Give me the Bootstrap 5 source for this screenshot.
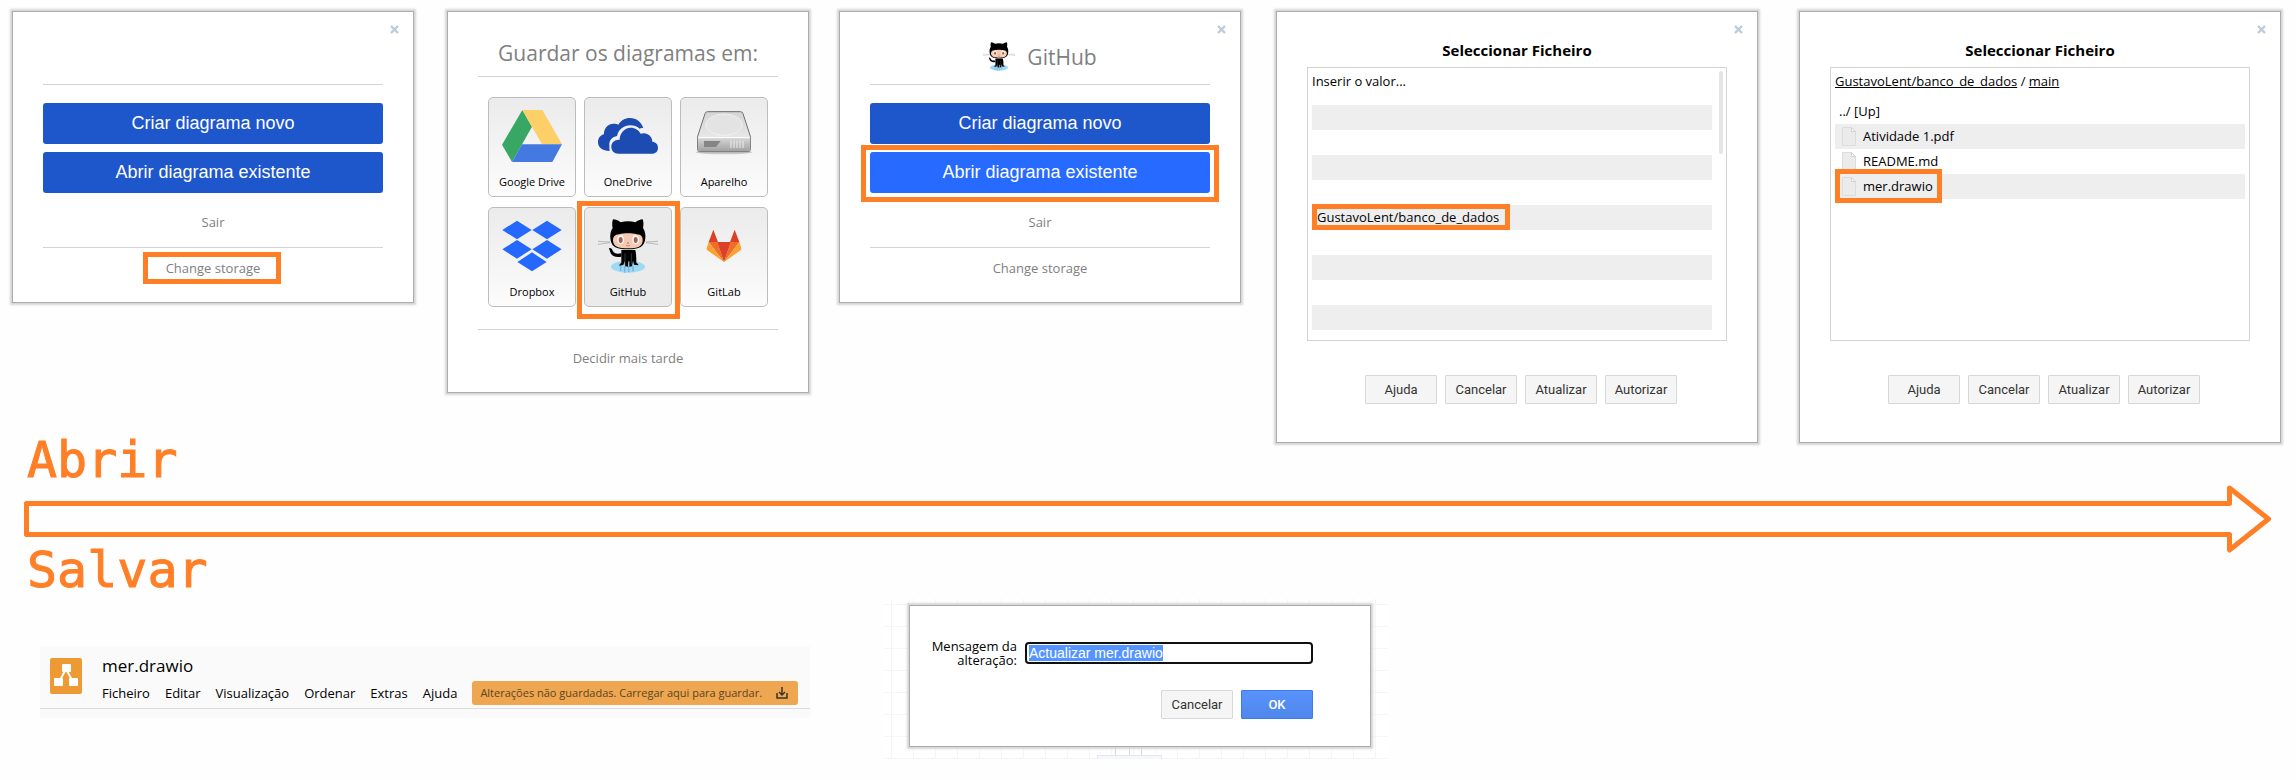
<!DOCTYPE html>
<html lang="pt">
<head>
<meta charset="utf-8">
<meta name="viewport" content="width=device-width, initial-scale=1">
<title>draw.io: abrir e salvar no GitHub</title>
<link rel="stylesheet" href="https://cdn.jsdelivr.net/npm/bootstrap@5.3.0/dist/css/bootstrap.min.css">
<style>
  :root { --mark: #ff7f27; }
  body { background: #fefefe; color: #000; font: 13px/18px "Open Sans", "Noto Sans", sans-serif; }
  a { color: inherit; text-decoration: none; }
  .steps { display: grid; grid-template-columns: 447fr 392fr 437fr 523fr 497fr; padding-top: 11px; align-items: start; }
  .step-a { padding: 0 33px 0 12px; }
  .step-b { padding-right: 30px; }
  .step-c { padding-right: 35px; }
  .step-d { padding-right: 41px; }
  .step-e { padding-right: 15px; }
  .dlg { background: #fff; border: 1px solid #acacac; box-shadow: 0 0 2px 2px #d5d5d5; padding: 0 30px; }
  .dlg-close { position: absolute; top: 13px; right: 14px; width: 9px; height: 9px; padding: 0; border: 0; background: none; display: flex; }
  .dlg-head { height: 72px; color: #808080; font-size: 21px; line-height: 28px; gap: 12px; padding-top: 18px; }
  .dlg-head-lg { height: 64px; }
  .rule { border-top: 1px solid #d3d3d3; }
  .main-btns { margin-top: 18px; }
  .btn-main { display: block; width: 100%; height: 41px; padding: 0; border: 0; border-radius: 3px; background: #1e56cb; color: #fff; font: 18px/41px "Liberation Sans", Arial, sans-serif; }
  .btn-hot { background: #266aff; }
  .quiet { color: #808080; }
  .exit-row { height: 54px; padding-top: 20px; }
  .storage-row { height: 54px; padding-top: 11px; }
  .later-row { height: 62px; padding-top: 19px; }
  .ring { position: relative; }
  .ring::after { content: ""; position: absolute; z-index: 2; inset: var(--ring); border: 5px solid var(--mark); pointer-events: none; }
  .ring-link { --ring: -7px -21px -7px -23px; }
  .ring-btn { --ring: -7px -9px -9px -9px; }
  .ring-tile { --ring: -7px -9px -13px -8px; }
  .ring-repo { --ring: -4px -11px -4px -5px; }
  .ring-file { --ring: -5px -9px -5px -7px; }
  .tiles { display: grid; grid-template-columns: repeat(3, 88px); gap: 10px 8px; justify-content: center; padding: 20px 0 22px; }
  .tile { height: 100px; padding: 9px 0 6px; border: 1px solid #bcbcbc; border-radius: 5px; background: linear-gradient(#ebebeb, #fcfcfc); color: #000; font-size: 11px; line-height: 16px; text-align: center; }
  .tile svg { display: block; width: 60px; height: 60px; margin: 0 auto 7px; }
  .tile-hot { background: #ebebeb; }
  .pick-title { font-size: 15px; line-height: 20px; font-weight: 700; padding: 28px 0 7px; margin: 0; text-align: center; }
  .pick-box { border: 1px solid #d3d3d3; height: 274px; padding: 4px; overflow: hidden; }
  .repo { height: 25px; padding: 0 5px; line-height: 25px; }
  .repos { margin-right: 10px; }
  .repos .repo:nth-child(even), .files .file:nth-child(even) { background: #eee; }
  .repo:first-child { height: 33px; padding: 0; line-height: 18px; }
  .repo a { line-height: 18px; }
  .thumb { position: absolute; top: 3px; right: 3px; width: 4px; height: 83px; border-radius: 2px; background: #e5e5e5; }
  .crumb { line-height: 18px; margin-bottom: 9px; }
  .crumb a { text-decoration: underline; }
  .file { height: 25px; line-height: 24px; padding-left: 7px; }
  .file-up { padding-left: 4px; }
  .file svg { width: 14px; height: 19px; margin-right: 7px; }
  .btn-tool { height: 29px; width: 72px; padding: 0; border: 1px solid #d8d8d8; border-radius: 1px; background: #f5f5f5; color: #333; font: 13px/27px Roboto, "Liberation Sans", sans-serif; }
  .btn-ok { background: linear-gradient(#5892fd, #4f87ea); border-color: #3a7bf0; color: #fff; font-weight: 500; }
  .btns { padding: 34px 0 38px 8px; gap: 8px; }
  .word { font: 50px/34px "DejaVu Sans Mono", monospace; color: var(--mark); -webkit-text-stroke: 1px var(--mark); margin: 0; padding-left: 27px; }
  .shaft { height: 36px; border: 5px solid var(--mark); border-right: 0; border-radius: 3px 0 0 3px; }
  .saves { display: grid; grid-template-columns: 884fr 504fr 908fr; align-items: start; padding-top: 12px; }
  .bar-cell { padding: 47px 74px 0 40px; }
  .appbar { background: #fafafa; height: 63px; border-bottom: 1px solid #dadce0; padding-left: 10px; }
  .logo { margin-top: 12px; }
  .appfoot { background: #fafafa; height: 9px; }
  .doc-name { font-size: 17px; line-height: 24px; margin-bottom: 3px; }
  .menu { gap: 15px; line-height: 24px; padding-right: 12px; }
  .save-note { flex: 1; justify-content: space-between; height: 24px; padding: 0 10px 0 8px; border: 0; border-radius: 3px; background: #efa650; color: #5b4524; font-size: 11px; line-height: 24px; white-space: nowrap; }
  .canvas { padding: 6px 17px 12px 25px; background-color: #fff; background-image: linear-gradient(#f5f5f5 1px, transparent 1px), linear-gradient(90deg, #f5f5f5 1px, transparent 1px); background-size: 22px 22px; background-position: 7px 5px; }
  .node { position: absolute; left: 213px; bottom: 0; width: 66px; height: 12px; }
  .msg { height: 142px; padding: 33px 57px 0 16px; }
  .msg label { width: 91px; line-height: 14px; text-align: right; }
  .msg input { height: 22px; min-width: 0; padding: 0 2px; border: 2px solid #101010; border-radius: 4px; outline: 0; font: 14px/16px "Liberation Sans", Arial, sans-serif; }
  .msg input::selection { background: rgba(83, 147, 255, .99); color: #fff; }
  .msg-btns { padding-top: 23px; }
</style>
</head>
<body>
<svg width="0" height="0" class="position-absolute" aria-hidden="true">
  <symbol id="cat" viewBox="369 51 180 180">
    <ellipse cx="459" cy="200" rx="51" ry="18" fill="#9fdaf5"/>
    <path d="M437 197v16M449 197v21M461 197v20M474 197v17" stroke="#7cb7e0" stroke-width="5"/>
    <path d="M369 124l36 2M369 133l36-5M549 124l-36 2M549 133l-36-5" stroke="#8c8c8c" stroke-width="1.6" fill="none"/>
    <path d="M402 144c8-1 10 5 12 10 4 8 14 8 25 6v10c-18 3-29-2-33-13-1-5-3-8-4-13z" fill="#000"/>
    <path d="M439 150h42c3 12 3 26 3 38l6 5-1 3-12-2-3-12-3 17-8 1v-16h-3l-1 16-8-1-2-16-4 12-12 2 1-4 5-5z" fill="#000"/>
    <path d="M450 160v34M469 160v34" stroke="#555" stroke-width="2"/>
    <path d="M414 58c8 0 16 4 23 9 14-4 31-4 44 0 7-5 15-8 22-9 3 8 3 17 1 26 6 9 8 18 7 30-2 27-18 34-53 34s-50-7-52-34c-1-12 1-21 7-30-2-9-2-18 1-26z" fill="#000"/>
    <path d="M433 103c12-4 40-4 52 0 15 0 19 10 18 20-2 16-14 22-44 22s-43-6-45-22c-1-10 5-20 19-20z" fill="#f4cbb2"/>
    <ellipse cx="437" cy="119" rx="10" ry="13" fill="#fff"/><ellipse cx="482" cy="119" rx="10" ry="13" fill="#fff"/>
    <ellipse cx="437" cy="120" rx="6" ry="9" fill="#ad5c51"/><ellipse cx="482" cy="120" rx="6" ry="9" fill="#ad5c51"/>
    <circle cx="459" cy="129" r="2.5" fill="#ad5c51"/><path d="M453 136q6 4 12 0" stroke="#ad5c51" stroke-width="2" fill="none"/>
  </symbol>
  <symbol id="cross" viewBox="0 0 9 9"><path d="M1 1l7 7M8 1L1 8" stroke="#bccade" stroke-width="2.4"/></symbol>
  <symbol id="sheet" viewBox="0 0 14 19"><path d="M.5.5h9l4 4v14H.5z" fill="#ebebeb" stroke="#dcdcdc"/><path d="M9.5.5v4h4z" fill="#f8f8f8" stroke="#d2d2d2"/></symbol>
</svg>

<main>
  <section class="steps">
    <div class="step-a">
      <div class="dlg position-relative">
        <button class="dlg-close" aria-label="Fechar"><svg width="9" height="9"><use href="#cross"/></svg></button>
        <div class="dlg-head"></div>
        <div class="rule"></div>
        <div class="main-btns d-grid gap-2">
          <button class="btn-main">Criar diagrama novo</button>
          <button class="btn-main">Abrir diagrama existente</button>
        </div>
        <div class="exit-row text-center"><a href="#" class="quiet">Sair</a></div>
        <div class="rule"></div>
        <div class="storage-row text-center"><a href="#" class="quiet d-inline-block ring ring-link">Change storage</a></div>
      </div>
    </div>

    <div class="step-b">
      <div class="dlg">
        <div class="dlg-head dlg-head-lg d-flex justify-content-center align-items-center">Guardar os diagramas em:</div>
        <div class="rule"></div>
        <div class="tiles">
          <button class="tile"><svg viewBox="81 51 180 180"><path d="M142 60l29 50-60 106-30-52z" fill="#37a763"/><path d="M142 60h60l59 103h-60z" fill="#fdcf67"/><path d="M141 163h120l-29 53H111z" fill="#4579e2"/></svg>Google Drive</button>
          <button class="tile"><svg viewBox="369 51 180 180"><path d="M404 183c-22 0-35-11-35-27 0-12 8-21 18-23-1-18 12-32 29-32 6 0 10 1 14 3 7-12 20-20 35-20 19 0 34 11 40 31-4-1-8-1-11 1-8-7-18-10-28-10-20 0-36 13-40 32-14 2-24 13-23 27 0 7 0 12 1 18z" fill="#1c4bb1"/><path d="M431 191c-14 0-22-9-22-21 0-13 10-22 25-21 0-19 14-36 33-36 14 0 24 7 30 18 18-6 35 6 35 24 11 1 17 9 17 18 0 11-7 18-19 18z" fill="#1c4bb1" stroke="#f1f1f1" stroke-width="5" paint-order="stroke"/></svg>OneDrive</button>
          <button class="tile"><svg viewBox="657 51 180 180"><defs><linearGradient id="h1" x2="0" y2="1"><stop stop-color="#d4d4d4"/><stop offset="1" stop-color="#f2f2f2"/></linearGradient><linearGradient id="h2" x2="0" y2="1"><stop stop-color="#d6d6d6"/><stop offset="1" stop-color="#a2a2a2"/></linearGradient></defs><ellipse cx="747" cy="187" rx="85" ry="6" fill="#c9c9c9"/><path d="M698 65h98q6 0 8 6l22 68v40q0 6-6 6H674q-6 0-6-6v-40l22-68q2-6 8-6z" fill="url(#h1)" stroke="#6e6e6e" stroke-width="3"/><path d="M669 144h156v34q0 5-6 5H675q-6 0-6-5z" fill="url(#h2)"/><ellipse cx="747" cy="104" rx="54" ry="32" fill="#e3e3e3" stroke="#f8f8f8" stroke-width="2"/><path d="M669 143h156" stroke="#fff" stroke-width="3"/><path d="M687 153h50l-14 18h-36z" fill="#858585"/><path d="M768 152v22M777 152v22M786 152v22M795 152v22M804 152v22" stroke="#eee" stroke-width="3"/></svg>Aparelho</button>
          <button class="tile"><svg viewBox="81 51 180 180"><path d="M126 62l44 28-44 28-44-28zM216 62l44 28-44 28-44-28zM126 120l44 28-44 28-44-28zM216 120l44 28-44 28-44-28zM171 157l44 29-44 28-44-28z" fill="#2468fd"/></svg>Dropbox</button>
          <button class="tile tile-hot ring ring-tile"><svg><use href="#cat"/></svg>GitHub</button>
          <button class="tile"><svg viewBox="657 51 180 180"><path d="M701 126l14-37 14 37zM765 126l14-37 14 37zM726 126h42l-21 60z" fill="#db4128"/><path d="M701 126h26l20 60zM793 126h-26l-20 60z" fill="#ef6c2a"/><path d="M701 126l46 60-51-36q-2-2-1-5zM793 126l-46 60 51-36q2-2 1-5z" fill="#f9a132"/></svg>GitLab</button>
        </div>
        <div class="rule"></div>
        <div class="later-row text-center"><a href="#" class="quiet">Decidir mais tarde</a></div>
      </div>
    </div>

    <div class="step-c">
      <div class="dlg position-relative">
        <button class="dlg-close" aria-label="Fechar"><svg width="9" height="9"><use href="#cross"/></svg></button>
        <div class="dlg-head d-flex justify-content-center align-items-center"><svg width="32" height="32"><use href="#cat"/></svg>GitHub</div>
        <div class="rule"></div>
        <div class="main-btns d-grid gap-2">
          <button class="btn-main">Criar diagrama novo</button>
          <button class="btn-main btn-hot ring ring-btn">Abrir diagrama existente</button>
        </div>
        <div class="exit-row text-center"><a href="#" class="quiet">Sair</a></div>
        <div class="rule"></div>
        <div class="storage-row text-center"><a href="#" class="quiet d-inline-block">Change storage</a></div>
      </div>
    </div>

    <div class="step-d">
      <div class="dlg position-relative">
        <button class="dlg-close" aria-label="Fechar"><svg width="9" height="9"><use href="#cross"/></svg></button>
        <h2 class="pick-title">Seleccionar Ficheiro</h2>
        <div class="pick-box position-relative">
          <div class="repos">
            <div class="repo">Inserir o valor...</div>
            <div class="repo"></div><div class="repo"></div><div class="repo"></div><div class="repo"></div>
            <div class="repo"><a href="#" class="d-inline-block ring ring-repo">GustavoLent/banco_de_dados</a></div>
            <div class="repo"></div><div class="repo"></div><div class="repo"></div><div class="repo"></div>
          </div>
          <div class="thumb"></div>
        </div>
        <div class="btns d-flex justify-content-center">
          <button class="btn-tool">Ajuda</button><button class="btn-tool">Cancelar</button><button class="btn-tool">Atualizar</button><button class="btn-tool">Autorizar</button>
        </div>
      </div>
    </div>

    <div class="step-e">
      <div class="dlg position-relative">
        <button class="dlg-close" aria-label="Fechar"><svg width="9" height="9"><use href="#cross"/></svg></button>
        <h2 class="pick-title">Seleccionar Ficheiro</h2>
        <div class="pick-box">
          <div class="crumb"><a href="#">GustavoLent/banco_de_dados</a> / <a href="#">main</a></div>
          <div class="files">
            <div class="file file-up"><a href="#">../ [Up]</a></div>
            <div class="file"><a href="#" class="d-inline-flex align-items-center"><svg><use href="#sheet"/></svg>Atividade 1.pdf</a></div>
            <div class="file"><a href="#" class="d-inline-flex align-items-center"><svg><use href="#sheet"/></svg>README.md</a></div>
            <div class="file"><a href="#" class="d-inline-flex align-items-center ring ring-file"><svg><use href="#sheet"/></svg>mer.drawio</a></div>
          </div>
        </div>
        <div class="btns d-flex justify-content-center">
          <button class="btn-tool">Ajuda</button><button class="btn-tool">Cancelar</button><button class="btn-tool">Atualizar</button><button class="btn-tool">Autorizar</button>
        </div>
      </div>
    </div>
  </section>

  <h1 class="word">Abrir</h1>
  <div class="d-flex align-items-center ps-4 pe-4 pt-2">
    <div class="shaft flex-grow-1"></div>
    <svg width="45" height="68" viewBox="0 0 45 68" fill="none" stroke="#ff7f27" stroke-width="5" stroke-linejoin="round" aria-hidden="true"><path d="M0 18.500H2.500V3L41.500 34 2.500 65V49.500H0"/></svg>
  </div>
  <h1 class="word">Salvar</h1>

  <section class="saves">
    <div class="bar-cell">
      <div class="appbar d-flex align-items-start">
        <svg width="32" height="36" viewBox="0 0 32 36" class="logo flex-shrink-0" aria-hidden="true"><rect width="32" height="36" rx="2" fill="#ed9a35"/><path d="M16 11L9 24M16 11l7 13" stroke="#fff" stroke-width="2"/><g fill="#fff"><rect x="12" y="6" width="9" height="8" rx="1"/><rect x="4" y="20" width="9" height="8" rx="1"/><rect x="19" y="20" width="9" height="8" rx="1"/></g></svg>
        <div class="flex-grow-1 ms-3 ps-1 pt-2">
          <div class="doc-name">mer.drawio</div>
          <nav class="menu d-flex"><a href="#">Ficheiro</a><a href="#">Editar</a><a href="#">Visualização</a><a href="#">Ordenar</a><a href="#">Extras</a><a href="#">Ajuda</a>
            <button class="save-note d-flex align-items-center">Alterações não guardadas. Carregar aqui para guardar.<svg width="12" height="12" viewBox="0 0 12 12" fill="none" stroke="#3c3426" stroke-width="1.500" aria-hidden="true"><path d="M1 6v5h10V6M6 0v8M3 5l3 3 3-3"/></svg></button></nav>
        </div>
      </div>
      <div class="appfoot"></div>
    </div>
    <div class="canvas position-relative">
      <svg class="node" viewBox="0 0 66 12" aria-hidden="true"><path d="M18.500 0v8M32.500 0v8M44.500 0v8" stroke="#d9d9dd"/><path d="M.5 12V8.500h64V12" fill="#f6f7fc" stroke="#e3e7f0"/></svg>
      <form class="dlg msg position-relative" onsubmit="return false">
        <div class="d-flex gap-2 align-items-center"><label for="msg">Mensagem da alteração:</label><input id="msg" class="flex-grow-1" value="Actualizar mer.drawio"></div>
        <div class="msg-btns d-flex gap-2 justify-content-end"><button type="button" class="btn-tool">Cancelar</button><button class="btn-tool btn-ok">OK</button></div>
      </form>
    </div>
  </section>
</main>
<script src="https://cdn.jsdelivr.net/npm/bootstrap@5.3.0/dist/js/bootstrap.bundle.min.js"></script>
<script>
  const field = document.getElementById('msg');
  field.focus({ preventScroll: true });
  field.select();
</script>
</body>
</html>
